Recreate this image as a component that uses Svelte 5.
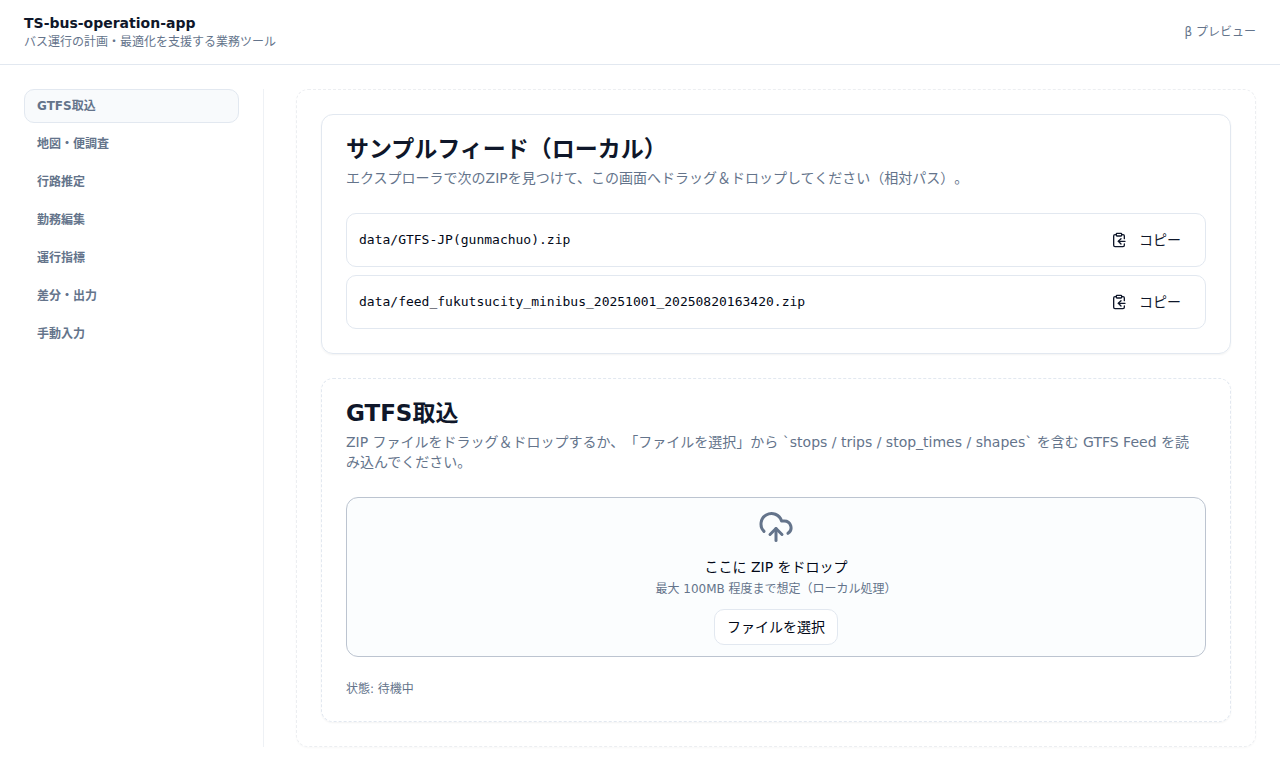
<script>
  const sections = ['GTFS取込', '地図・便調査', '行路推定', '勤務編集', '運行指標', '差分・出力', '手動入力'];
  const feeds = ['data/GTFS-JP(gunmachuo).zip', 'data/feed_fukutsucity_minibus_20251001_20250820163420.zip'];
  let active = $state(0);
  let picker;

  function copy(path) {
    navigator.clipboard?.writeText(path);
  }
</script>

<header class="topbar">
  <div>
    <h1>TS-bus-operation-app</h1>
    <p class="small">バス運行の計画・最適化を支援する業務ツール</p>
  </div>
  <span class="small">β プレビュー</span>
</header>

<div class="layout">
  <nav class="sidebar">
    {#each sections as section, i}
      <button class="tab" class:active={active === i} onclick={() => (active = i)}>{section}</button>
    {/each}
  </nav>

  <main class="panel">
    <section class="card">
      <h2>サンプルフィード（ローカル）</h2>
      <p class="lead">エクスプローラで次のZIPを見つけて、この画面へドラッグ＆ドロップしてください（相対パス）。</p>
      <ul class="feeds">
        {#each feeds as feed}
          <li>
            <code>{feed}</code>
            <button class="copy" onclick={() => copy(feed)}>
              <svg width="16" height="16" viewBox="0 0 24 24" aria-hidden="true">
                <rect width="8" height="4" x="8" y="2" rx="1" ry="1" />
                <path d="M8 4H6a2 2 0 0 0-2 2v14a2 2 0 0 0 2 2h12a2 2 0 0 0 2-2v-2" />
                <path d="M16 4h2a2 2 0 0 1 2 2v4" />
                <path d="M21 14H11" />
                <path d="m15 10-4 4 4 4" />
              </svg>
              コピー
            </button>
          </li>
        {/each}
      </ul>
    </section>

    <section class="card dashed">
      <h2>GTFS取込</h2>
      <p class="lead">ZIP ファイルをドラッグ＆ドロップするか、「ファイルを選択」から `stops / trips / stop_times / shapes` を含む GTFS Feed を読み込んでください。</p>
      <div class="dropzone">
        <svg class="cloud" width="36" height="36" viewBox="0 0 24 24" aria-hidden="true">
          <path d="M12 13v8" />
          <path d="M4 14.899A7 7 0 1 1 15.71 8h1.79a4.5 4.5 0 0 1 2.5 8.242" />
          <path d="m8 17 4-4 4 4" />
        </svg>
        <div class="hint">
          <p>ここに ZIP をドロップ</p>
          <p class="small">最大 100MB 程度まで想定（ローカル処理）</p>
        </div>
        <button class="choose" onclick={() => picker.click()}>ファイルを選択</button>
        <input bind:this={picker} type="file" accept=".zip" aria-label="ファイルを選択" hidden />
      </div>
      <p class="small">状態: 待機中</p>
    </section>
  </main>
</div>

<style>
  :global(body) {
    margin: 0;
    background: #fff;
    color: #020817;
    font: 14px/20px 'DejaVu Sans', 'Noto Sans CJK JP', sans-serif;
    text-spacing-trim: space-all;
  }

  h1, h2, p, ul {
    margin: 0;
    padding: 0;
  }

  button {
    font: inherit;
    color: inherit;
    background: none;
    border: 1px solid transparent;
    border-radius: 10px;
    cursor: pointer;
  }

  svg {
    fill: none;
    stroke: currentColor;
    stroke-width: 2;
    stroke-linecap: round;
    stroke-linejoin: round;
    flex-shrink: 0;
  }

  .small {
    font-size: 12px;
    line-height: 16px;
    color: #64748b;
  }

  .topbar {
    display: flex;
    align-items: center;
    justify-content: space-between;
    padding: 14px 24px;
    border-bottom: 1px solid #e2e8f0;
  }

  h1 {
    margin-bottom: 2px;
    font-size: 14px;
    line-height: 18px;
    font-weight: 600;
    color: #0f172a;
  }

  .layout {
    display: grid;
    grid-template-columns: 240px minmax(0, 1fr);
    gap: 32px;
    padding: 24px;
  }

  .sidebar {
    display: flex;
    flex-direction: column;
    gap: 4px;
    padding-right: 24px;
    border-right: 1px solid #eef1f5;
  }

  .tab {
    padding: 8px 12px;
    font-size: 12px;
    line-height: 16px;
    font-weight: 600;
    text-align: left;
    color: #64748b;
  }

  .tab.active {
    background: #f8fafc;
    border-color: #e2e8f0;
  }

  .panel {
    display: flex;
    flex-direction: column;
    gap: 24px;
    padding: 24px;
    border: 1px dashed #eceef1;
    border-radius: 12px;
    box-shadow: 0 1px 2px rgb(0 0 0 / 3%);
  }

  .card {
    padding: 24px;
    border: 1px solid #e2e8f0;
    border-radius: 12px;
    box-shadow: 0 1px 2px rgb(0 0 0 / 5%);
  }

  .dashed {
    border-style: dashed;
  }

  h2 {
    margin-bottom: 9px;
    font-size: 23px;
    line-height: 20px;
    font-weight: 600;
    color: #0f172a;
  }

  .lead {
    margin-bottom: 25px;
    padding-right: 8px;
    color: #64748b;
  }

  .feeds {
    display: grid;
    gap: 8px;
    list-style: none;
  }

  .feeds li {
    display: flex;
    align-items: center;
    justify-content: space-between;
    gap: 12px;
    padding: 8px 12px;
    border: 1px solid #e2e8f0;
    border-radius: 10px;
  }

  code {
    font: 13px/20px 'DejaVu Sans Mono', monospace;
    overflow-wrap: anywhere;
  }

  .copy {
    display: flex;
    align-items: center;
    gap: 12px;
    flex-shrink: 0;
    padding: 7px 11px;
    color: #0f172a;
  }

  .dropzone {
    box-sizing: border-box;
    display: flex;
    flex-direction: column;
    align-items: center;
    justify-content: center;
    gap: 12px;
    min-height: 160px;
    margin-bottom: 24px;
    border: 1px solid #bcc4d0;
    border-radius: 12px;
    background: #fbfdfe;
    text-align: center;
  }

  .cloud {
    color: #64748b;
  }

  .hint {
    display: grid;
    gap: 4px;
  }

  .choose {
    padding: 7px 12px;
    background: #fff;
    border-color: #e2e8f0;
  }
</style>
